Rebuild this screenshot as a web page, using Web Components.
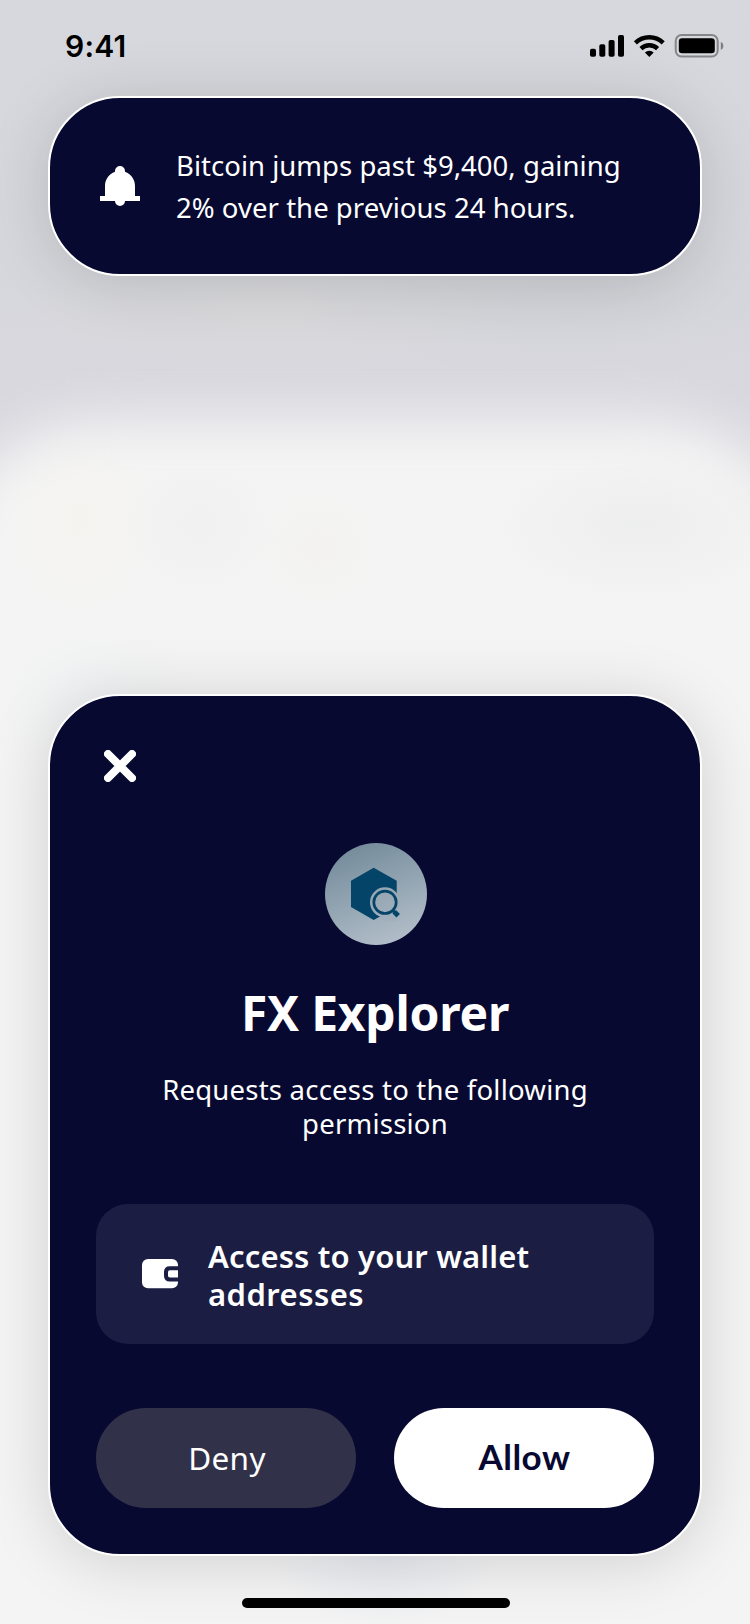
<!DOCTYPE html>
<html lang="en">
<head>
<meta charset="utf-8">
<title>FX Explorer – permission request</title>
<style>
  html, body { margin: 0; padding: 0; }
  body { width: 750px; height: 1624px; overflow: hidden; font-family: "Noto Sans", "Open Sans", sans-serif; }
</style>
</head>
<body>
<phone-screen>
  <status-bar slot="status" time="9:41"></status-bar>
  <notice-banner>Bitcoin jumps past $9,400, gaining<span slot="second">2% over the previous 24 hours.</span></notice-banner>
  <permission-sheet slot="sheet" name="FX Explorer">
    <span slot="message">Requests access to the following<br>permission</span>
    <permission-item slot="permissions">Access to your wallet<span slot="second">addresses</span></permission-item>
    <pill-button slot="actions">Deny</pill-button>
    <pill-button slot="actions" primary>Allow</pill-button>
  </permission-sheet>
</phone-screen>

<script>
const define = (tag, html) => {
  const template = document.createElement('template');
  template.innerHTML = html;
  customElements.define(tag, class extends HTMLElement {
    constructor() {
      super();
      this.attachShadow({ mode: 'open' }).append(template.content.cloneNode(true));
    }
    connectedCallback() {
      for (const node of this.shadowRoot.querySelectorAll('[data-attr]'))
        node.textContent = this.getAttribute(node.dataset.attr);
    }
  });
};

define('phone-screen', `
<style>
  :host { display: flex; flex-direction: column; position: relative; isolation: isolate; box-sizing: border-box;
    width: 750px; height: 1624px; overflow: hidden; background: linear-gradient(#d7d8dd 0, #d6d7dc 280px, #d9d8df 380px); }
  .backdrop { position: absolute; inset: 0; z-index: -1; overflow: hidden; }
  .page { position: absolute; left: -60px; right: -60px; top: 420px; height: 1400px; border-radius: 160px;
    background: #f4f4f4; filter: blur(27px); }
  .tints { position: absolute; inset: 0; background:
    radial-gradient(ellipse 150px 75px at 640px 525px, rgba(225,226,228,.35), transparent),
    radial-gradient(ellipse 75px 100px at 80px 520px, rgba(246,240,222,.2), transparent),
    radial-gradient(ellipse 80px 75px at 198px 525px, rgba(232,233,236,.3), transparent),
    radial-gradient(ellipse 65px 60px at 318px 548px, rgba(240,238,228,.3), transparent),
    radial-gradient(ellipse 110px 90px at 90px 700px, rgba(222,230,238,.15), transparent),
    radial-gradient(ellipse 110px 70px at 384px 1560px, rgba(196,208,232,.25), transparent),
    radial-gradient(ellipse 280px 90px at 570px 290px, rgba(196,201,206,.25), transparent),
    radial-gradient(ellipse 240px 70px at 270px 310px, rgba(222,221,214,.3), transparent); }
  main { flex: 1; display: flex; flex-direction: column; justify-content: space-between; padding: 0 48px; }
  .home { display: flex; justify-content: center; padding: 42px 0 16px; margin-left: 2px; }
  .home i { width: 268px; height: 10px; border-radius: 5px; background: #000; }
</style>
<div class="backdrop"><div class="page"></div><div class="tints"></div></div>
<slot name="status"></slot>
<main><slot></slot><slot name="sheet"></slot></main>
<div class="home"><i></i></div>`);

define('status-bar', `
<style>
  :host { display: flex; justify-content: space-between; align-items: flex-start; box-sizing: border-box; height: 96px;
    padding: 26px 25px 0 65px; color: #000; font: 600 30px/40px Inter, sans-serif; letter-spacing: .2px; }
  svg { display: block; }
</style>
<span data-attr="time"></span>
<svg width="136" height="40" viewBox="589 26 136 40">
  <rect x="590" y="48.7" width="6" height="8" rx="1.8"/>
  <rect x="599.3" y="44.3" width="6" height="12.4" rx="1.8"/>
  <rect x="608.6" y="40" width="6" height="16.7" rx="1.8"/>
  <rect x="618" y="35" width="6" height="21.7" rx="1.8"/>
  <g fill="none" stroke="#000" stroke-width="4.4">
    <path d="M635.4 42.8a20 20 0 0 1 27.8 0"/>
    <path d="M641 48.6a12 12 0 0 1 16.6 0"/>
  </g>
  <path d="M649.3 57l-4.4-4.600a6.400 6.400 0 0 1 8.800 0z"/>
  <rect x="675.7" y="35" width="42" height="21.600" rx="6" fill="none" stroke="#000" stroke-opacity=".38" stroke-width="2"/>
  <rect x="678.8" y="38.300" width="36" height="15" rx="3.200"/>
  <path d="M720.8 42v8c1.600-.6 2.600-2.200 2.600-4s-1-3.400-2.600-4z" fill-opacity=".42"/>
</svg>`);

define('notice-banner', `
<style>
  :host { display: flex; align-items: center; gap: 36px; box-sizing: border-box; height: 180px; padding: 0 48px;
    border: 2px solid #fff; border-radius: 72px; background: #070930; color: #fff;
    box-shadow: 0 6px 64px rgba(0,0,0,.15); font-size: 27.500px; line-height: 42px; white-space: nowrap; }
  svg { flex: none; display: block; margin-left: 2px; }
  .text { padding-top: 2px; }
  .one { letter-spacing: .03px; }
  .two { letter-spacing: .04px; }
</style>
<svg width="40" height="40" viewBox="0 0 40 40" fill="#fff"><path d="M15 5a5 5 0 0 1 10 0v.8C31 8 35 13.500 35 20v10h5v5H25a5 5 0 0 1-10 0H0v-5h5V20C5 13.500 9 8 15 5.800z"/></svg>
<div class="text"><div class="one"><slot></slot></div><div class="two"><slot name="second"></slot></div></div>`);

define('permission-sheet', `
<style>
  :host { display: flex; flex-direction: column; align-items: center; box-sizing: border-box; height: 862px;
    padding: 54px 46px 46px; border: 2px solid #fff; border-radius: 72px; background: #070930; color: #fff;
    box-shadow: 0 6px 64px rgba(0,0,0,.15); text-align: center; }
  svg { display: block; flex: none; }
  .close { align-self: flex-start; margin-left: 8px; }
  .logo { margin: 60px 0 0 2px; }
  h1 { margin: 38px 0 31px; font-size: 48px; line-height: 58px; font-weight: 700; letter-spacing: -.24px; }
  p { margin: 0 0 63px; font-size: 27.500px; line-height: 34px; letter-spacing: .22px; }
  .actions { display: flex; gap: 38px; align-self: stretch; margin-top: auto; }
</style>
<svg class="close" width="32" height="32" viewBox="0 0 32 32" stroke="#fff" stroke-width="8" stroke-linecap="round"><path d="M4 4l24 24M28 4L4 28"/></svg>
<svg class="logo" width="102" height="104" viewBox="325 842 102 104">
  <defs><linearGradient id="g" x1=".3" y1="0" x2=".7" y2="1"><stop stop-color="#748b9b"/><stop offset="1" stop-color="#b3bfca"/></linearGradient></defs>
  <circle cx="376" cy="894" r="51" fill="url(#g)"/>
  <path d="M373.700 867.700l23 13V907l-23 13-22.700-13v-26.300z" fill="#044468"/>
  <circle cx="385" cy="902.300" r="15" fill="url(#g2)"/>
  <defs><linearGradient id="g2" x1=".3" y1="0" x2=".7" y2="1"><stop stop-color="#94a5b2"/><stop offset="1" stop-color="#a0afbb"/></linearGradient></defs>
  <path d="M379 916.900l17.700-1.900v6h-17.700z" fill="#a1b0bc"/>
  <circle cx="385" cy="902.300" r="11.200" fill="none" stroke="#044468" stroke-width="2.700"/>
  <path d="M392.200 910l2.200 2.200" stroke="#044468" stroke-width="3"/>
  <path d="M394.200 911.800l4 4" stroke="#044468" stroke-width="5"/>
</svg>
<h1 data-attr="name"></h1>
<p><slot name="message"></slot></p>
<slot name="permissions"></slot>
<div class="actions"><slot name="actions"></slot></div>`);

define('permission-item', `
<style>
  :host { display: flex; align-items: center; gap: 30px; align-self: stretch; box-sizing: border-box; height: 140px;
    padding: 2px 46px 0; border-radius: 32px; background: #1c1d43; text-align: left; white-space: nowrap;
    font-size: 31px; line-height: 38px; font-weight: 600; }
  svg { display: block; flex: none; margin-top: -3px; }
  .one { letter-spacing: .15px; }
  .two { letter-spacing: .45px; }
</style>
<svg width="36" height="30" viewBox="0 0 36 30">
  <rect width="36" height="29.300" rx="6" fill="#fff"/>
  <path d="M37 9.300h-9.200q-3.800 0-3.800 3.800v3.600q0 3.800 3.800 3.800H37" fill="#fff" stroke="#1c1d43" stroke-width="4"/>
</svg>
<div><div class="one"><slot></slot></div><div class="two"><slot name="second"></slot></div></div>`);

define('pill-button', `
<style>
  :host { flex: none; width: 260px; display: flex; align-items: center; justify-content: center; box-sizing: border-box; height: 100px;
    border-radius: 50px; padding: 0 0 2px 2px; background: #32314a; color: #fff; font-size: 31.500px; letter-spacing: .3px; }
  :host([primary]) { background: #fff; color: #070930; font: 700 35px Lato, sans-serif; letter-spacing: .5px; padding: 0 0 4px 1px; }
</style>
<slot></slot>`);
</script>
</body>
</html>
